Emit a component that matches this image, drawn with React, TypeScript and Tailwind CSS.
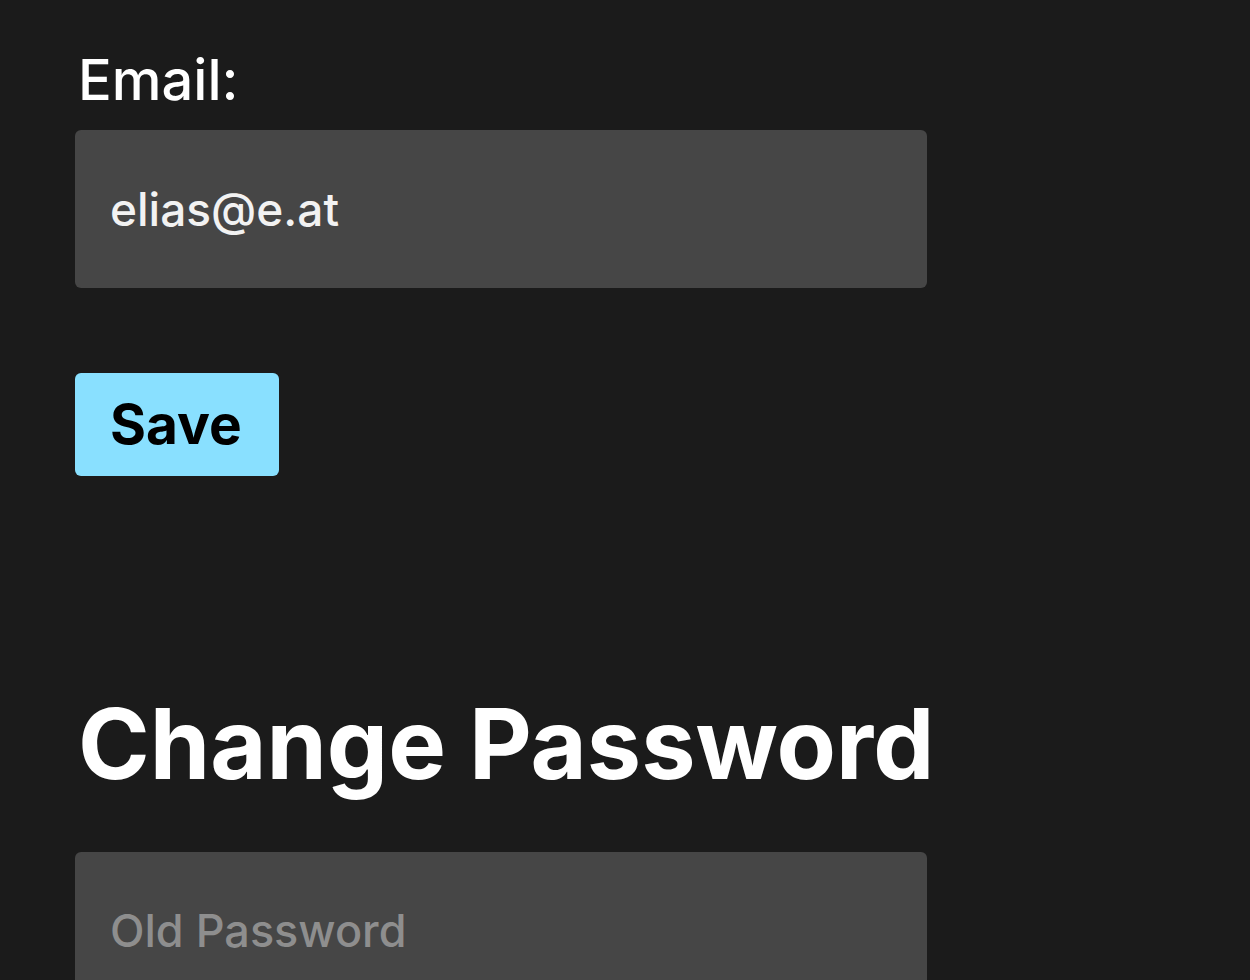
export default function App() {
  return (
    <div className="min-h-[980px] w-full bg-[#1b1b1b] text-white" style={{ fontFamily: 'Inter, "Noto Sans", sans-serif' }}>
      <div className="flex flex-col items-start pl-[75px] pt-[47px]">
        <label className="ml-[3px] h-[67px] text-[56px] font-medium leading-[67px]">Email:</label>
        <div className="mt-[16px] flex h-[158px] w-[852px] items-center rounded-[6px] bg-[#464646] px-[35px]">
          <span className="text-[46px] font-medium text-[#f2f2f2]">elias@e.at</span>
        </div>
        <button className="mt-[85px] flex h-[103px] w-[204px] items-center rounded-[6px] bg-[#89e0ff] px-[35px] text-[55px] font-bold text-black">
          Save
        </button>
        <h2 className="ml-[3px] mt-[210px] h-[116px] text-[97px] font-bold leading-[116px]">Change Password</h2>
        <div className="mt-[50px] flex h-[158px] w-[852px] items-center rounded-[6px] bg-[#464646] px-[35px]">
          <span className="text-[45px] font-medium text-[#8e8e8e]">Old Password</span>
        </div>
      </div>
    </div>
  );
}
